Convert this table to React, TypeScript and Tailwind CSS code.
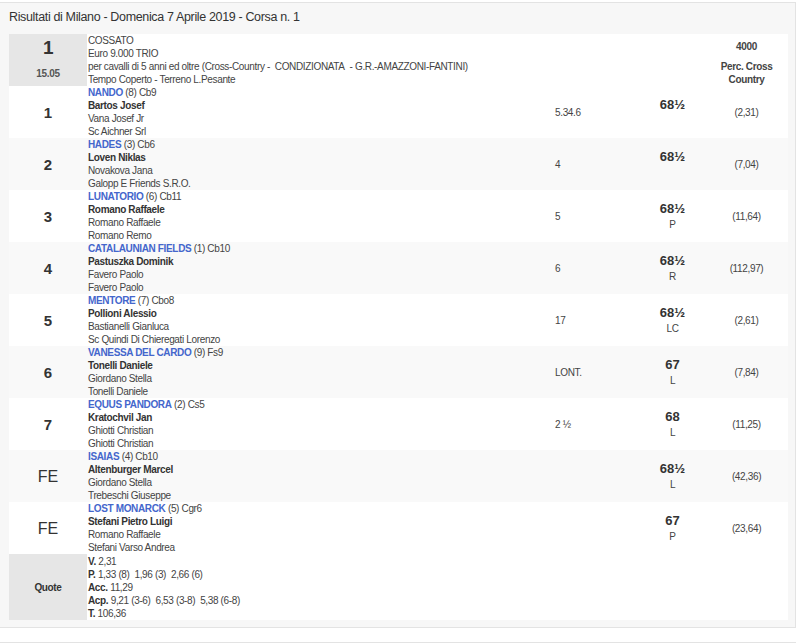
import React from 'react';

type Row = {
  pos: string;
  horse: string;
  extra: string;
  jockey: string;
  trainer: string;
  owner: string;
  dist: string;
  weight: string;
  sub: string;
  odds: string;
};

const rows: Row[] = [
  { pos: '1', horse: 'NANDO', extra: '(8) Cb9', jockey: 'Bartos Josef', trainer: 'Vana Josef Jr', owner: 'Sc Aichner Srl', dist: '5.34.6', weight: '68½', sub: '', odds: '(2,31)' },
  { pos: '2', horse: 'HADES', extra: '(3) Cb6', jockey: 'Loven Niklas', trainer: 'Novakova Jana', owner: 'Galopp E Friends S.R.O.', dist: '4', weight: '68½', sub: '', odds: '(7,04)' },
  { pos: '3', horse: 'LUNATORIO', extra: '(6) Cb11', jockey: 'Romano Raffaele', trainer: 'Romano Raffaele', owner: 'Romano Remo', dist: '5', weight: '68½', sub: 'P', odds: '(11,64)' },
  { pos: '4', horse: 'CATALAUNIAN FIELDS', extra: '(1) Cb10', jockey: 'Pastuszka Dominik', trainer: 'Favero Paolo', owner: 'Favero Paolo', dist: '6', weight: '68½', sub: 'R', odds: '(112,97)' },
  { pos: '5', horse: 'MENTORE', extra: '(7) Cbo8', jockey: 'Pollioni Alessio', trainer: 'Bastianelli Gianluca', owner: 'Sc Quindi Di Chieregati Lorenzo', dist: '17', weight: '68½', sub: 'LC', odds: '(2,61)' },
  { pos: '6', horse: 'VANESSA DEL CARDO', extra: '(9) Fs9', jockey: 'Tonelli Daniele', trainer: 'Giordano Stella', owner: 'Tonelli Daniele', dist: 'LONT.', weight: '67', sub: 'L', odds: '(7,84)' },
  { pos: '7', horse: 'EQUUS PANDORA', extra: '(2) Cs5', jockey: 'Kratochvil Jan', trainer: 'Ghiotti Christian', owner: 'Ghiotti Christian', dist: '2 ½', weight: '68', sub: 'L', odds: '(11,25)' },
  { pos: 'FE', horse: 'ISAIAS', extra: '(4) Cb10', jockey: 'Altenburger Marcel', trainer: 'Giordano Stella', owner: 'Trebeschi Giuseppe', dist: '', weight: '68½', sub: 'L', odds: '(42,36)' },
  { pos: 'FE', horse: 'LOST MONARCK', extra: '(5) Cgr6', jockey: 'Stefani Pietro Luigi', trainer: 'Romano Raffaele', owner: 'Stefani Varso Andrea', dist: '', weight: '67', sub: 'P', odds: '(23,64)' },
];

const grid = 'grid grid-cols-[78px_466px_87px_65px_83px]';

export default function App() {
  return (
    <div className="h-[643px] w-[796px] overflow-hidden bg-white pt-[2px] text-[10px] leading-[13px] tracking-[-0.35px] text-[#444]" style={{ fontFamily: '"Liberation Sans", Arial, sans-serif' }}>
      <div className="border-t border-r border-b border-[#e3e3e3] bg-[#f7f7f7] pb-[7px] pl-[9px]">
        <div className="h-[31px] pt-[8px] text-[12.5px] tracking-[-0.35px] text-[#333]">
          Risultati di Milano - Domenica 7 Aprile 2019 - Corsa n. 1
        </div>

        <div className="w-[779px] bg-white">
          {/* header row */}
          <div className={`${grid} h-[52px]`}>
            <div className="flex flex-col items-center bg-[#e6e6e6] pt-[3px]">
              <span className="text-[19px] font-bold leading-[22px] text-[#333]">1</span>
              <span className="mt-[8px] font-bold text-[#555]">15.05</span>
            </div>
            <div className="col-span-3 pl-[1px]">
              <div>COSSATO</div>
              <div>Euro 9.000 TRIO</div>
              <div>per cavalli di 5 anni ed oltre (Cross-Country -&nbsp; CONDIZIONATA&nbsp; - G.R.-AMAZZONI-FANTINI)</div>
              <div>Tempo Coperto - Terreno L.Pesante</div>
            </div>
            <div className="flex flex-col items-center pt-[6px] font-bold text-[#444]">
              <span>4000</span>
              <span className="mt-[7px] text-center leading-[13px]">
                Perc. Cross
                <br />
                Country
              </span>
            </div>
          </div>

          {rows.map((r, i) => (
            <div key={i} className={`${grid} h-[52px] ${i % 2 === 1 ? 'bg-[#f9f9f9]' : 'bg-white'}`}>
              <div className={`flex items-center justify-center tracking-normal text-[#333] ${r.pos === 'FE' ? 'text-[16px]' : 'text-[15px] font-bold'}`}>
                {r.pos}
              </div>
              <div className="pl-[1px]">
                <div>
                  <span className="font-bold text-[#4466cc]">{r.horse}</span> {r.extra}
                </div>
                <div className="font-bold text-[#333]">{r.jockey}</div>
                <div>{r.trainer}</div>
                <div>{r.owner}</div>
              </div>
              <div className="flex items-center pl-[2px]">{r.dist}</div>
              <div className="flex flex-col items-center justify-center">
                <span className="text-[13px] font-bold leading-[16px] tracking-normal text-[#333]">{r.weight}</span>
                <span className="mt-[1px] h-[13px]">{r.sub}</span>
              </div>
              <div className="flex items-center justify-center">{r.odds}</div>
            </div>
          ))}

          {/* quote row */}
          <div className={`${grid} h-[66px]`}>
            <div className="flex items-center justify-center bg-[#e6e6e6] font-bold text-[#333]">Quote</div>
            <div className="col-span-4 pl-[1px] pt-[1px]">
              <div><b className="text-[#333]">V.</b> 2,31</div>
              <div><b className="text-[#333]">P.</b> 1,33 (8)&nbsp; 1,96 (3)&nbsp; 2,66 (6)</div>
              <div><b className="text-[#333]">Acc.</b> 11,29</div>
              <div><b className="text-[#333]">Acp.</b> 9,21 (3-6)&nbsp; 6,53 (3-8)&nbsp; 5,38 (6-8)</div>
              <div><b className="text-[#333]">T.</b> 106,36</div>
            </div>
          </div>
        </div>
      </div>
      <div className="mt-[14px] border-t border-[#e3e3e3]" />
    </div>
  );
}
